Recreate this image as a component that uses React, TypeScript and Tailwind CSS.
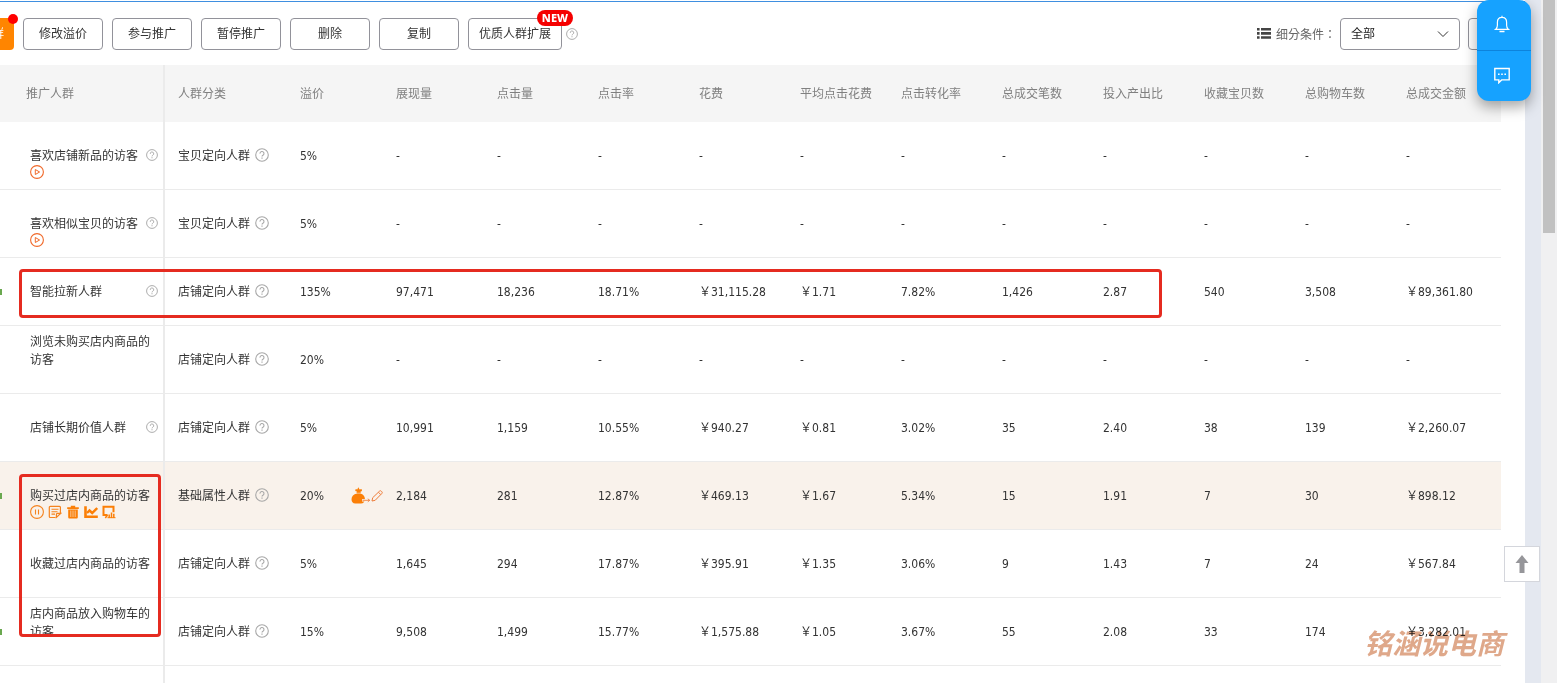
import React from "react";
import clsx from "clsx";

type Row = {
  name: string;
  help?: boolean;
  active?: boolean;
  playable?: boolean;
  hovered?: boolean;
  category: string;
  premium: string;
  values: string[];
};

const EMPTY = Array(11).fill("-");

const METRICS = [
  "展现量",
  "点击量",
  "点击率",
  "花费",
  "平均点击花费",
  "点击转化率",
  "总成交笔数",
  "投入产出比",
  "收藏宝贝数",
  "总购物车数",
  "总成交金额",
];

const ROWS: Row[] = [
  { name: "喜欢店铺新品的访客", help: true, playable: true, category: "宝贝定向人群", premium: "5%", values: EMPTY },
  { name: "喜欢相似宝贝的访客", help: true, playable: true, category: "宝贝定向人群", premium: "5%", values: EMPTY },
  {
    name: "智能拉新人群",
    help: true,
    active: true,
    category: "店铺定向人群",
    premium: "135%",
    values: ["97,471", "18,236", "18.71%", "￥31,115.28", "￥1.71", "7.82%", "1,426", "2.87", "540", "3,508", "￥89,361.80"],
  },
  { name: "浏览未购买店内商品的访客", category: "店铺定向人群", premium: "20%", values: EMPTY },
  {
    name: "店铺长期价值人群",
    help: true,
    category: "店铺定向人群",
    premium: "5%",
    values: ["10,991", "1,159", "10.55%", "￥940.27", "￥0.81", "3.02%", "35", "2.40", "38", "139", "￥2,260.07"],
  },
  {
    name: "购买过店内商品的访客",
    active: true,
    hovered: true,
    category: "基础属性人群",
    premium: "20%",
    values: ["2,184", "281", "12.87%", "￥469.13", "￥1.67", "5.34%", "15", "1.91", "7", "30", "￥898.12"],
  },
  {
    name: "收藏过店内商品的访客",
    category: "店铺定向人群",
    premium: "5%",
    values: ["1,645", "294", "17.87%", "￥395.91", "￥1.35", "3.06%", "9", "1.43", "7", "24", "￥567.84"],
  },
  {
    name: "店内商品放入购物车的访客",
    active: true,
    category: "店铺定向人群",
    premium: "15%",
    values: ["9,508", "1,499", "15.77%", "￥1,575.88", "￥1.05", "3.67%", "55", "2.08", "33", "174", "￥3,282.01"],
  },
];

function HelpIcon({ className }: { className?: string }) {
  return (
    <svg viewBox="0 0 14 14" fill="none" stroke="#a8a8a8" className={clsx("shrink-0", className)}>
      <circle cx="7" cy="7" r="6.3" strokeWidth="1.1" />
      <path d="M5 5.6a2 2 0 1 1 3 1.6c-.7.4-1 .7-1 1.4" strokeWidth="1.1" />
      <path d="M7 9.6v1.2" strokeWidth="1.2" />
    </svg>
  );
}

function PlayIcon() {
  return (
    <svg viewBox="0 0 14 14" fill="none" stroke="#f0692a" className="size-[14px]">
      <circle cx="7" cy="7" r="6.4" strokeWidth="1.1" />
      <path d="M5.3 4.5v5L9.6 7z" />
    </svg>
  );
}

function PauseIcon() {
  return (
    <svg viewBox="0 0 14 14" fill="none" stroke="#f5831f" className="size-[14px]">
      <circle cx="7" cy="7" r="6.4" strokeWidth="1.1" />
      <path d="M5.5 4.5v5M8.5 4.5v5" strokeWidth="1.1" />
    </svg>
  );
}

function NoteIcon() {
  return (
    <svg viewBox="0 0 14 14" fill="none" stroke="#f5831f" className="size-[14px]">
      <path d="M7.5 12.5H2.2a.9.9 0 0 1-.9-.9V2.3c0-.5.4-.9.9-.9h9.3c.5 0 .9.4.9.9v6M12.6 8.4H9.4c-.6 0-1 .4-1 1v3z" strokeWidth="1.2" />
      <path d="M3.5 4.3h7M3.5 6.7h6M3.5 9.1H7" strokeWidth="1.1" />
    </svg>
  );
}

function TrashIcon() {
  return (
    <svg viewBox="0 0 14 14" className="size-[14px]">
      <path d="M4.800.8h4.400v1.500h3.600v1.700H1.200V2.300h3.600z" fill="#fb7f07" />
      <path d="M2.200 4.500h9.600v7.500c0 1-.5 1.500-1.500 1.500H3.700c-1 0-1.500-.5-1.500-1.500z" fill="#fb7f07" />
      <path d="M4.800 5.500v6.500M7 5.500v6.500M9.200 5.500v6.500" stroke="#f9f2eb" strokeWidth=".6" />
    </svg>
  );
}

function TrendIcon() {
  return (
    <svg viewBox="0 0 14 14" fill="none" stroke="#fb7f07" className="size-[14px]">
      <path d="M1.500 1.200v10.600h12.300" strokeWidth="2.600" />
      <path d="M3 8l2.500-2.500L8.200 8l5-5" strokeWidth="2.400" />
    </svg>
  );
}

function BoardIcon() {
  return (
    <svg viewBox="0 0 14 14" fill="none" stroke="#fb7f07" className="size-[14px]">
      <path d="M5.500 10H1.500V1.800h10v5.400" strokeWidth="2" />
      <path d="M3.300 13l2.200-3" strokeWidth="1.500" />
      <path d="M7.200 13V9.500M9.500 13V7.500M11.800 13V8.800" strokeWidth="1.500" />
      <path d="M5.500 12.700h8" />
    </svg>
  );
}

function MoneyBagIcon() {
  return (
    <svg viewBox="0 0 20 17" className="h-[17px] w-5">
      <path
        d="M6 4.600L4.200 4l.5-2 1.600.500L7.300.3l1.300 2.100 2-.5.400 2.100-1.600.700c.5.500.5 1.200.1 1.700 2.600.7 4.400 2.600 4.400 5.400 0 3-1.400 4.700-4 4.700H4.400C1.800 16.500.5 14.900.5 12.300c0-3.100 2.200-5.300 5.300-5.900-.4-.600-.3-1.300.2-1.800z"
        fill="#fb7f07"
      />
      <path d="M4.500 6.200h6" stroke="#f9f2eb" strokeWidth=".6" />
      <path d="M11 13.300h8.500" stroke="#f9f2eb" strokeWidth="2.400" />
      <path d="M11.500 13.300h7.300M16.800 11.800l1.900 1.500-1.900 1.500" stroke="#f07f3a" strokeWidth=".9" fill="none" />
    </svg>
  );
}

function PencilIcon() {
  return (
    <svg viewBox="0 0 12 12" fill="none" stroke="#ee7d3a" className="size-3">
      <path d="M1 11l.7-3.300L8.600 1.100c.5-.500 1.100-.500 1.600 0l.7.700c.5.500.5 1.100 0 1.600L4.200 10.300zM7.500 2.300l2.200 2.200" />
    </svg>
  );
}

function ToolButton({ children }: { children: React.ReactNode }) {
  return (
    <button className="h-8 min-w-20 rounded border border-[#92929a] bg-white px-[10px] text-center whitespace-nowrap">
      {children}
    </button>
  );
}

function Toolbar() {
  return (
    <div className="flex h-16 items-center justify-between border-t border-[#3f8fe0]">
      <div className="flex items-center gap-[9px]">
        <div className="relative">
          <button className="flex h-8 w-[14px] items-center justify-end overflow-hidden rounded-r bg-[#ff8500] pr-[10px] text-white">
            <span className="shrink-0">群</span>
          </button>
          <span className="absolute -top-1 -right-1 size-[10px] rounded-full bg-[#ff0000]" />
        </div>
        <ToolButton>修改溢价</ToolButton>
        <ToolButton>参与推广</ToolButton>
        <ToolButton>暂停推广</ToolButton>
        <ToolButton>删除</ToolButton>
        <ToolButton>复制</ToolButton>
        <div className="relative flex items-center gap-1">
          <ToolButton>优质人群扩展</ToolButton>
          <HelpIcon className="size-3" />
          <span className="absolute -top-2 right-[5px] rounded-full bg-[#f50000] px-[5px] font-['Noto_Sans'] text-[11px] leading-4 font-extrabold text-white">
            NEW
          </span>
        </div>
      </div>

      <div className="flex items-center">
        <svg viewBox="0 0 14 11" fill="#444" className="mr-[5px] h-[11px] w-[14px]">
          <path d="M0 0h2.6v2.6H0zM4 0h10v2.6H4zM0 4.1h2.6v2.6H0zM4 4.1h10v2.6H4zM0 8.2h2.6v2.6H0zM4 8.2h10v2.6H4z" />
        </svg>
        <label htmlFor="segment" className="font-['Noto_Sans_CJK_TC',sans-serif] text-[#666]">
          细分条件：
        </label>
        <div className="relative ml-1">
          <select
            id="segment"
            className="h-8 w-[120px] appearance-none rounded border border-[#92929a] bg-white px-[10px] text-[#222]"
          >
            <option>全部</option>
          </select>
          <svg viewBox="0 0 12 8" fill="none" stroke="#333" className="pointer-events-none absolute top-3 right-[11px] h-2 w-3">
            <path d="M1 1.5l5 5 5-5" />
          </svg>
        </div>
        <button aria-label="更多" className="mr-[17px] ml-2 h-8 w-10 rounded border border-[#92929a] bg-white" />
      </div>
    </div>
  );
}

function NameCell({ row }: { row: Row }) {
  return (
    <div className="flex items-center">
      <span className={clsx("mr-7 h-[6px] w-[2px] shrink-0", row.active && "bg-[#6aa84f]")} />
      <div className="flex-1 pr-[5px]">
        <div className="flex min-h-9 items-end justify-between">
          <span>{row.name}</span>
          {row.help && <HelpIcon className="mb-1 size-3" />}
        </div>
        <div className="flex h-[18px] items-start gap-1">
          {row.playable && (
            <button aria-label="开启">
              <PlayIcon />
            </button>
          )}
          {row.hovered && (
            <>
              <button aria-label="暂停"><PauseIcon /></button>
              <button aria-label="编辑"><NoteIcon /></button>
              <button aria-label="删除"><TrashIcon /></button>
              <button aria-label="趋势"><TrendIcon /></button>
              <button aria-label="报表"><BoardIcon /></button>
            </>
          )}
        </div>
      </div>
    </div>
  );
}

function AudienceTable() {
  return (
    <table className="w-full table-fixed border-separate border-spacing-0 text-left">
      <colgroup>
        <col className="w-[165px]" />
        <col className="w-[122px]" />
        <col className="w-[96px]" />
        {METRICS.slice(1).map((m) => (
          <col key={m} className="w-[101px]" />
        ))}
        <col />
      </colgroup>
      <thead className="bg-[#f5f5f5] text-[#808080]">
        <tr className="h-[57px]">
          <th className="border-r-2 border-[#ebebeb] pl-[26px] font-normal">推广人群</th>
          <th className="pl-[13px] font-normal">人群分类</th>
          <th className="pl-[13px] font-normal">溢价</th>
          {METRICS.map((m) => (
            <th key={m} className="pl-[13px] font-normal">
              {m}
            </th>
          ))}
        </tr>
      </thead>
      <tbody>
        {ROWS.map((row) => (
          <tr key={row.name} className={clsx("h-[68px]", row.hovered && "bg-[#f9f2eb]")}>
            <td className="border-r-2 border-b border-[#ebebeb]">
              <NameCell row={row} />
            </td>
            <td className="border-b border-[#ebebeb] pl-[13px]">
              <div className="flex items-start gap-[5px]">
                {row.category}
                <HelpIcon className="mt-px size-[14px]" />
              </div>
            </td>
            <td className="border-b border-[#ebebeb] pl-[13px]">
              <div className="flex h-[18px] items-center justify-between">
                {row.premium}
                {row.hovered && (
                  <span className="flex items-center">
                    <MoneyBagIcon />
                    <button aria-label="修改溢价">
                      <PencilIcon />
                    </button>
                  </span>
                )}
              </div>
            </td>
            {row.values.map((v, i) => (
              <td key={i} className="border-b border-[#ebebeb] pl-[13px] whitespace-nowrap">
                {v}
              </td>
            ))}
          </tr>
        ))}
        <tr className="h-[68px]">
          <td className="border-r-2 border-[#ebebeb]" />
          <td colSpan={13} />
        </tr>
      </tbody>
    </table>
  );
}

function FloatingPanel() {
  return (
    <div className="absolute top-0 right-[26px] w-[54px] overflow-hidden rounded-xl bg-[#16a2ff] shadow-[0_6px_14px_rgba(0,0,0,0.35)]">
      <button
        aria-label="通知"
        className="flex h-[51px] w-full items-center justify-center border-b border-[#0d83dc] pr-1 pb-[2px]"
      >
        <svg viewBox="0 0 16 18" fill="none" stroke="#fff" strokeWidth="1.2" className="h-[18px] w-4">
          <path d="M8 .8v1.500M1.600 14.400c1.300-1 1.800-2 1.800-4.200V7.300C3.400 4.400 5.300 2.400 8 2.400s4.600 2 4.600 4.900v2.900c0 2.200.5 3.200 1.800 4.200z" />
          <path d="M5.500 16.500h5" strokeWidth="1.400" />
        </svg>
      </button>
      <button aria-label="消息" className="flex h-[50px] w-full items-center justify-center pr-1 pb-[2px]">
        <svg viewBox="0 0 16 17" fill="none" stroke="#fff" strokeWidth="1.4" className="h-[17px] w-4">
          <path d="M.8 1.500h14.400v11.400H7.600l-2.800 2.800v-2.800h-4z" />
          <path d="M4 7.200h1.600M7.200 7.200h1.600M10.400 7.200H12" strokeWidth="1.500" />
        </svg>
      </button>
    </div>
  );
}

export default function App() {
  return (
    <div className="relative flex h-screen overflow-hidden bg-[#e4e8f0] font-['DejaVu_Sans_Condensed','Noto_Sans_CJK_SC',sans-serif] text-xs leading-[18px] text-[#333]">
      <main className="min-w-0 flex-1 bg-white pt-px">
        <Toolbar />
        <div className="pr-6">
          <AudienceTable />
        </div>
      </main>

      {/* Scrollbar */}
      <div className="ml-4 w-4 shrink-0 bg-[#f0f0f1] px-[2px]">
        <div className="h-[233px] bg-[#c1c1c1]" />
      </div>

      {/* Highlight frames */}
      <div className="pointer-events-none absolute top-[269px] left-[19px] h-[49px] w-[1143px] rounded border-3 border-[#e52b20]" />
      <div className="pointer-events-none absolute top-[474px] left-[19px] h-[163px] w-[142px] rounded border-3 border-[#e52b20]" />

      <FloatingPanel />

      <button
        aria-label="返回顶部"
        className="absolute right-[17px] bottom-[101px] flex size-9 items-center justify-center border border-[#d4d6dc] bg-white"
      >
        <svg viewBox="0 0 14 18" fill="#96969a" className="h-[18px] w-[14px]">
          <path d="M7 0l6.500 8H9.500v10h-5V8H.5z" />
        </svg>
      </button>

      <div className="pointer-events-none absolute right-[53px] bottom-[22px] text-[28px] leading-8 font-bold text-[#dfa88a] italic mix-blend-multiply">
        铭涵说电商
      </div>
    </div>
  );
}
